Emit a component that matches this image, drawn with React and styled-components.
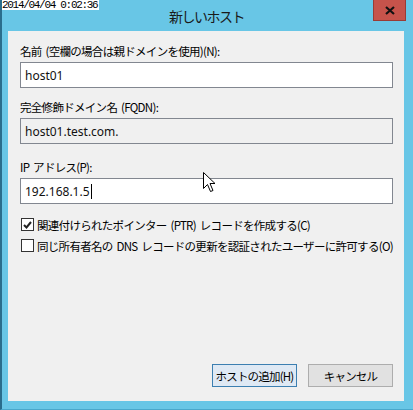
import React from "react";
import styled, { createGlobalStyle } from "styled-components";

const Global = createGlobalStyle`
  html, body { margin: 0; padding: 0; background: #68c6e6; }
  body { font-family: "Noto Sans CJK JP", "Noto Sans", sans-serif; }
`;

const Window = styled.div`
  position: relative;
  width: 413px;
  height: 410px;
  box-sizing: border-box;
  background: #68c6e6;
  border-left: 2px solid #2a6d8c;
  border-bottom: 1px solid #4aa8cc;
  display: flex;
  flex-direction: column;
  overflow: hidden;
`;

const TitleBar = styled.div`
  height: 31px;
  flex: none;
  display: grid;
  grid-template-columns: 1fr auto 1fr;
  align-items: start;
`;

const Title = styled.div`
  grid-column: 2;
  margin-top: 6px;
  margin-left: -2px;
  font-size: 14px;
  line-height: 20px;
  letter-spacing: -1.5px;
  color: #1a1a1a;
`;

const CloseButton = styled.div`
  grid-column: 3;
  justify-self: end;
  margin-right: 7px;
  width: 33px;
  height: 21px;
  box-sizing: border-box;
  background: #c6534b;
  border: 1px solid #9a3b35;
  border-top: none;
  display: flex;
  align-items: center;
  justify-content: center;
`;

const Stamp = styled.div`
  position: absolute;
  left: 0;
  top: 0;
  width: 97px;
  height: 10px;
  background: #fff;
  color: #000;
  font-family: "Liberation Mono", monospace;
  font-size: 11px;
  line-height: 10px;
  letter-spacing: -1.3px;
  white-space: nowrap;
  overflow: hidden;
`;

const Content = styled.div`
  flex: 1;
  margin: 0 9px 8px 6px;
  background: #f0f0f0;
  padding: 12px 11px 0 12px;
  display: flex;
  flex-direction: column;
  color: #000;
  font-size: 11.5px;
`;

const Label = styled.div`
  line-height: 16px;
  margin-top: ${(p) => p.$top || 0}px;
  margin-bottom: 3px;
  letter-spacing: -0.7px;
  word-spacing: 2px;
  white-space: nowrap;
`;

const Field = styled.div`
  height: ${(p) => p.$h || 26}px;
  box-sizing: border-box;
  border: 1px solid #828790;
  background: ${(p) => (p.$readonly ? "#f0f0f0" : "#fff")};
  display: flex;
  align-items: center;
  padding-left: 4px;
  font-family: "Noto Sans", "Noto Sans CJK JP", sans-serif;
  font-size: 12px;
  color: #111;
`;

const Caret = styled.span`
  display: inline-block;
  width: 1px;
  height: 15px;
  background: #000;
  margin-left: 1px;
`;

const CheckRow = styled.div`
  display: flex;
  align-items: center;
  height: 21px;
  margin-top: ${(p) => p.$top || 0}px;
  white-space: nowrap;
  letter-spacing: -0.7px;
  word-spacing: 2px;
`;

const Box = styled.div`
  flex: none;
  width: 13px;
  height: 13px;
  box-sizing: border-box;
  border: 1px solid #333;
  background: #fff;
  margin-left: 1px;
  margin-right: 3px;
  display: flex;
  align-items: center;
  justify-content: center;
`;

const Spacer = styled.div`
  flex: 1;
`;

const ButtonRow = styled.div`
  display: flex;
  justify-content: flex-end;
  gap: 11px;
  margin-bottom: 14px;
`;

const Button = styled.div`
  width: 85px;
  height: 23px;
  box-sizing: border-box;
  border: 1px solid ${(p) => (p.$default ? "#3c7fb1" : "#adadad")};
  background: ${(p) => (p.$default ? "#dfe9f4" : "#e1e1e1")};
  display: flex;
  align-items: center;
  justify-content: center;
  font-size: 11.5px;
  letter-spacing: -0.8px;
  white-space: nowrap;
`;

const Cursor = styled.svg`
  position: absolute;
  left: 201px;
  top: 172px;
`;

export default function App() {
  return (
    <>
      <Global />
      <Window>
        <Stamp>2014/04/04 0:02:36</Stamp>
        <TitleBar>
          <Title>新しいホスト</Title>
          <CloseButton>
            <svg width="10" height="9" viewBox="0 0 10 9">
              <path d="M1 1 L9 8 M9 1 L1 8" stroke="#111" strokeWidth="2.2" />
            </svg>
          </CloseButton>
        </TitleBar>
        <Content>
          <Label>名前 (空欄の場合は親ドメインを使用)(N):</Label>
          <Field>host01</Field>
          <Label $top={11}>完全修飾ドメイン名 (FQDN):</Label>
          <Field $readonly>host01.test.com.</Field>
          <Label $top={15}>IP アドレス(P):</Label>
          <Field $h={26}>
            192.168.1.5
            <Caret />
          </Field>
          <CheckRow $top={10}>
            <Box>
              <svg width="9" height="8" viewBox="0 0 9 8">
                <path d="M1 4 L3.5 6.5 L8 1" stroke="#222" strokeWidth="2" fill="none" />
              </svg>
            </Box>
            関連付けられたポインター (PTR) レコードを作成する(C)
          </CheckRow>
          <CheckRow>
            <Box />
            同じ所有者名の DNS レコードの更新を認証されたユーザーに許可する(O)
          </CheckRow>
          <Spacer />
          <ButtonRow>
            <Button $default>ホストの追加(H)</Button>
            <Button>キャンセル</Button>
          </ButtonRow>
        </Content>
        <Cursor width="13" height="21" viewBox="0 0 13 21">
          <path
            d="M0.5 0.5 L0.5 16.5 L4.5 12.5 L7.5 19.5 L10 18.5 L7 11.5 L12 11.5 Z"
            fill="#fff"
            stroke="#000"
            strokeWidth="1"
          />
        </Cursor>
      </Window>
    </>
  );
}
